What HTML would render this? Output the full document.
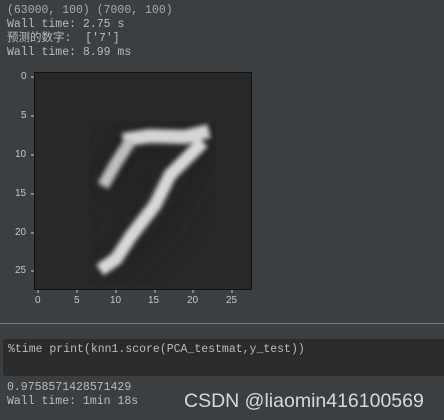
<!DOCTYPE html><html><head><style>
body{margin:0;width:444px;height:420px;background:#3c3f41;position:relative;overflow:hidden;font-family:"Liberation Mono",monospace;color:#bbbbbb}
.t{position:absolute;font-size:11.5px;white-space:pre;line-height:14px}
.tk{position:absolute;font-family:"Liberation Sans",sans-serif;font-size:10px;color:#c8c8c8}
</style></head><body>
<div class="t" style="left:7px;top:4px;color:#a9a9a9">(63000, 100) (7000, 100)</div>
<div class="t" style="left:7px;top:18px">Wall time: 2.75 s</div>
<div class="t" style="left:7px;top:32px;font-family:'Liberation Mono','Noto Sans CJK SC',monospace">预测的数字:  ['7']</div>
<div class="t" style="left:7px;top:46px">Wall time: 8.99 ms</div>
<svg style="position:absolute;left:0;top:0" width="444" height="320">
<defs><filter id="b"><feGaussianBlur stdDeviation="2.5"/></filter><filter id="h"><feGaussianBlur stdDeviation="14"/></filter><clipPath id="c"><rect x="34" y="72" width="218" height="218"/></clipPath></defs>
<rect x="34" y="72" width="218" height="218" fill="#282828"/>
<g clip-path="url(#c)">
<g filter="url(#h)" opacity="0.5"><polyline points="100,200 130,140 205,135 150,230 100,270" stroke="#1c1c1c" stroke-width="40" fill="none"/></g>
<g filter="url(#b)">
<polyline points="123,140 150,136 185,137 209,131" stroke="#d5d5d5" stroke-width="14" fill="none"/>
<polyline points="131,140 116,163 103,186" stroke="#c0c0c0" stroke-width="12" fill="none"/>
<polyline points="203,142 170,175 155,205 131,236 116,259 100,270" stroke="#d8d8d8" stroke-width="13" fill="none"/>
</g></g>
<rect x="34.5" y="72.5" width="217" height="217" fill="none" stroke="#111"/>
<g stroke="#ccc"><line x1="31" y1="77" x2="34" y2="77"/><line x1="31" y1="116" x2="34" y2="116"/><line x1="31" y1="155" x2="34" y2="155"/><line x1="31" y1="194" x2="34" y2="194"/><line x1="31" y1="233" x2="34" y2="233"/><line x1="31" y1="271" x2="34" y2="271"/>
<line x1="38" y1="290" x2="38" y2="293"/><line x1="77" y1="290" x2="77" y2="293"/><line x1="116" y1="290" x2="116" y2="293"/><line x1="155" y1="290" x2="155" y2="293"/><line x1="193" y1="290" x2="193" y2="293"/><line x1="232" y1="290" x2="232" y2="293"/></g>
</svg>
<div class="tk" style="left:21px;top:71px">0</div>
<div class="tk" style="left:21px;top:110px">5</div>
<div class="tk" style="left:15px;top:149px">10</div>
<div class="tk" style="left:15px;top:188px">15</div>
<div class="tk" style="left:15px;top:227px">20</div>
<div class="tk" style="left:15px;top:265px">25</div>
<div class="tk" style="left:35px;top:295px">0</div>
<div class="tk" style="left:74px;top:295px">5</div>
<div class="tk" style="left:110px;top:295px">10</div>
<div class="tk" style="left:148px;top:295px">15</div>
<div class="tk" style="left:187px;top:295px">20</div>
<div class="tk" style="left:226px;top:295px">25</div>
<div style="position:absolute;left:0;top:323px;width:444px;height:1px;background:#5f8a82"></div>
<div style="position:absolute;left:3px;top:339px;width:445px;height:37px;background:#2b2b2b;border-radius:3px"></div>
<div class="t" style="left:8px;top:343px">%time print(knn1.score(PCA_testmat,y_test))</div>
<div class="t" style="left:7px;top:381px">0.9758571428571429</div>
<div class="t" style="left:7px;top:395px">Wall time: 1min 18s</div>
<div style="position:absolute;left:184px;top:390px;font-family:'Liberation Sans',sans-serif;font-size:19.5px;color:#d8d8d8;white-space:nowrap">CSDN @liaomin416100569</div>
</body></html>
